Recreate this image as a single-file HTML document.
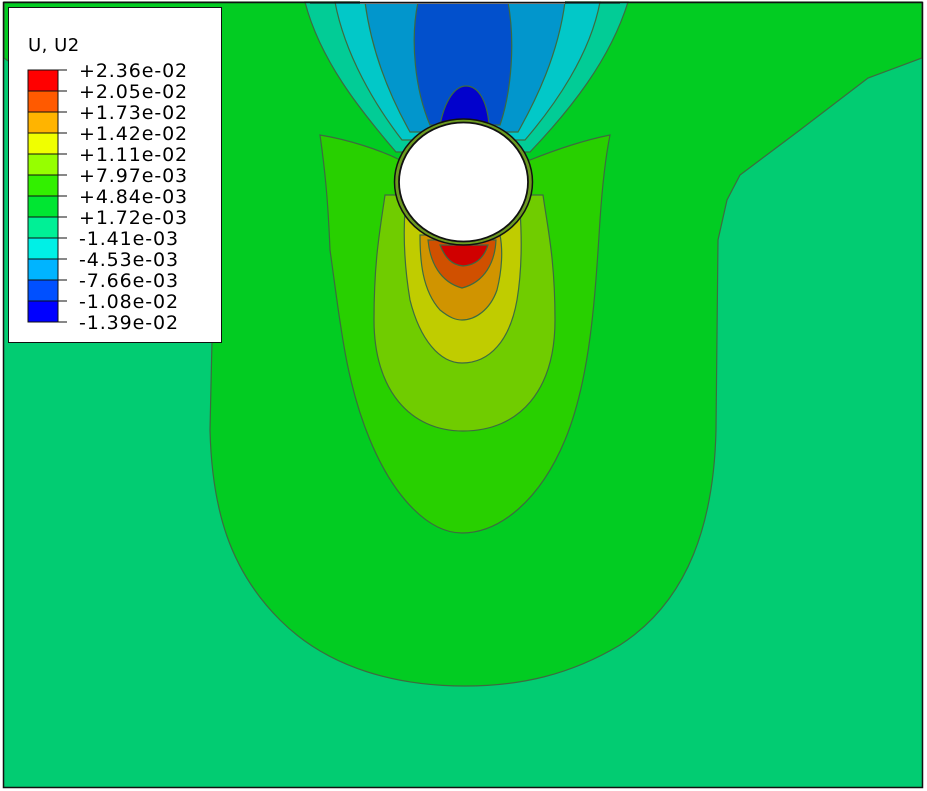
<!DOCTYPE html>
<html><head><meta charset="utf-8"><style>
html,body{margin:0;padding:0;background:#fff;width:927px;height:791px;overflow:hidden}
svg{display:block}
text{font-family:"DejaVu Sans","Liberation Sans",sans-serif;font-size:19px;letter-spacing:0.9px;fill:#000}
</style></head><body>
<svg width="927" height="791" viewBox="0 0 927 791">
<rect x="0" y="0" width="927" height="791" fill="#fff"/>
<g stroke="#3d6b40" stroke-width="1.2">
<rect x="4" y="2" width="918" height="785" fill="#02cc72" stroke="none"/>
<path d="M4,2 L922,2 L922,58 L868,78 L800,130 L740,175 L727,200 L718,240 L716,430 C714,520 690,600 620,645 C570,675 520,686 465,686 C400,686 330,670 280,620 C230,570 212,510 210,430 L212,340 L200,200 L4,58 Z" fill="#02cc22"/>
<path d="M305,2 C320,60 360,110 396,152 L530,152 C570,110 610,60 628,2 Z" fill="#02cc96"/>
<path d="M335,2 C345,55 375,105 402,140 L525,140 C555,105 590,55 600,2 Z" fill="#02c8c8"/>
<path d="M365,2 C372,55 392,100 410,132 L518,132 C536,100 558,55 565,2 Z" fill="#0296cc"/>
<path d="M418,2 C410,40 415,90 430,125 L500,125 C512,90 515,40 508,2 Z" fill="#0250cc"/>
<path d="M440,125 C445,100 455,86 466,86 C478,86 487,100 489,125 Z" fill="#0202cc"/>
<path d="M400,160 C380,150 350,140 320,135 C325,170 328,200 330,250 C340,320 345,380 370,440 C395,500 430,533 462,533 C500,533 540,500 565,440 C590,380 595,300 600,220 C602,190 605,160 610,135 C585,140 555,150 530,160 Z" fill="#28d000"/>
<path d="M385,195 C380,230 374,260 374,320 C374,390 410,431 463,431 C520,431 555,390 555,320 C555,260 548,230 543,195 Z" fill="#70cc00"/>
<path d="M405,210 C403,240 405,270 410,300 C420,340 440,363 462,363 C490,363 510,340 517,300 C522,270 522,240 520,210 Z" fill="#c0cc00"/>
<path d="M420,235 C420,260 422,290 440,310 C450,318 456,320 462,320 C475,320 490,310 497,290 C502,270 503,250 500,235 Z" fill="#d09400"/>
<path d="M428,240 C430,262 440,282 462,288 C485,282 495,262 496,240 Z" fill="#d05000"/>
<path d="M440,245 C445,258 452,265 463,266 C476,265 484,258 488,245 Z" fill="#d00000"/>
</g>
<rect x="360" y="0" width="205" height="4" fill="#fff"/>
<line x1="310" y1="3" x2="620" y2="3" stroke="#222" stroke-width="1.2"/>
<ellipse cx="463.5" cy="182" rx="69" ry="63" fill="#6c9a20" stroke="#111" stroke-width="1.5"/>
<ellipse cx="463.5" cy="182" rx="64.5" ry="59.5" fill="#fff" stroke="#111" stroke-width="1.8"/>
<rect x="3.5" y="2.5" width="919" height="785" fill="none" stroke="#111" stroke-width="1.5"/>
<rect x="8.5" y="7.5" width="213" height="335" fill="#fff" stroke="#111" stroke-width="1"/>
<text x="28" y="51" style="font-size:18px;letter-spacing:0.5px">U, U2</text>
<g stroke="#111" stroke-width="1">
<rect x="28" y="70" width="30" height="21" fill="#ff0000"/>
<rect x="28" y="91" width="30" height="21" fill="#ff5a00"/>
<rect x="28" y="112" width="30" height="21" fill="#ffb400"/>
<rect x="28" y="133" width="30" height="21" fill="#f0ff00"/>
<rect x="28" y="154" width="30" height="21" fill="#96ff00"/>
<rect x="28" y="175" width="30" height="21" fill="#32f000"/>
<rect x="28" y="196" width="30" height="21" fill="#00e632"/>
<rect x="28" y="217" width="30" height="21" fill="#00f096"/>
<rect x="28" y="238" width="30" height="21" fill="#00f0e6"/>
<rect x="28" y="259" width="30" height="21" fill="#00b4ff"/>
<rect x="28" y="280" width="30" height="21" fill="#0050ff"/>
<rect x="28" y="301" width="30" height="21" fill="#0000ff"/>
<path d="M58,70H67M58,91H67M58,112H67M58,133H67M58,154H67M58,175H67M58,196H67M58,217H67M58,238H67M58,259H67M58,280H67M58,301H67M58,322H67"/>
</g>
<g>
<text x="79" y="77">+2.36e-02</text>
<text x="79" y="98">+2.05e-02</text>
<text x="79" y="119">+1.73e-02</text>
<text x="79" y="140">+1.42e-02</text>
<text x="79" y="161">+1.11e-02</text>
<text x="79" y="182">+7.97e-03</text>
<text x="79" y="203">+4.84e-03</text>
<text x="79" y="224">+1.72e-03</text>
<text x="79" y="245">-1.41e-03</text>
<text x="79" y="266">-4.53e-03</text>
<text x="79" y="287">-7.66e-03</text>
<text x="79" y="308">-1.08e-02</text>
<text x="79" y="329">-1.39e-02</text>
</g>
</svg>
</body></html>
